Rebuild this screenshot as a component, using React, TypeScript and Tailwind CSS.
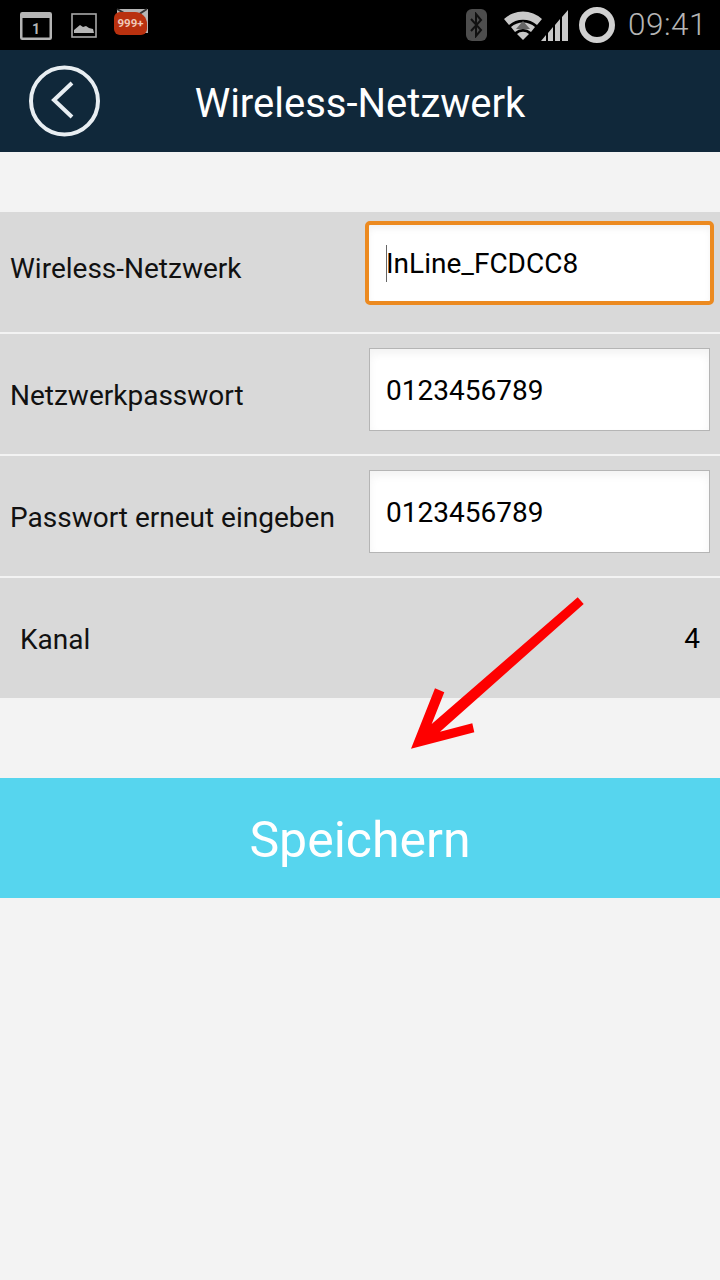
import React from "react";

const StatusBar = () => (
  <div className="h-[50px] bg-black flex items-center justify-between pr-[13px]">
    <div className="flex items-center pl-[20px]">
      {/* calendar */}
      <svg width="32" height="28" viewBox="0 0 32 28" className="mt-[1px]">
        <rect x="1.25" y="1.25" width="29.5" height="25.5" rx="1" fill="none" stroke="#b5b5b5" strokeWidth="2.5" />
        <rect x="1" y="1" width="30" height="5" fill="#b5b5b5" />
        <text x="16" y="22" textAnchor="middle" fontSize="14" fontWeight="700" fill="#b5b5b5" fontFamily="Roboto, sans-serif">1</text>
      </svg>
      {/* picture */}
      <svg width="26" height="25" viewBox="0 0 26 25" className="ml-[19px]">
        <rect x="1" y="1" width="24" height="23" fill="none" stroke="#a8a8a8" strokeWidth="1.6" />
        <path d="M3 20 L3 17 L9 12 L12 14 L15 13 L18 15 L22 16 L23 20 Z" fill="#b5b5b5" />
      </svg>
      {/* notification with badge */}
      <div className="relative w-[33px] h-[30px] ml-[18px]">
        <svg width="33" height="26" viewBox="0 0 33 26" className="absolute left-[1px] top-[-2px]">
          <rect x="1" y="1" width="31" height="24" fill="#b5b5b5" />
          <path d="M1 1 L17 10 L31 1" fill="none" stroke="#333" strokeWidth="2" />
        </svg>
        <div className="absolute left-[-1px] top-[2px] w-[33px] h-[23px] rounded-[6px] rounded-tr-[12px] bg-[#b9310f] flex items-center justify-center text-[11.5px] font-bold text-[#f0c8b8] font-['Roboto',sans-serif]">
          999+
        </div>
      </div>
    </div>
    <div className="flex items-center">
      {/* bluetooth */}
      <div className="w-[21px] h-[32px] rounded-[6px] bg-[#4d4d4d] flex items-center justify-center">
        <svg width="15" height="26" viewBox="0 0 15 26">
          <path d="M2 7 L12 18 L7 24 L7 2 L12 8 L2 19" fill="none" stroke="#111" strokeWidth="2" />
        </svg>
      </div>
      {/* wifi */}
      <svg width="38" height="30" viewBox="0 0 38 30" className="ml-[17px]">
        <path d="M0 9 A28 28 0 0 1 38 9 L33 15 A21 21 0 0 0 5 15 Z" fill="#c8c8c8" />
        <path d="M7 17 A18 18 0 0 1 31 17 L27 22 A12 12 0 0 0 11 22 Z" fill="#c8c8c8" />
        <path d="M19 11 L26 19 L12 19 Z" fill="#666" />
        <path d="M13 24 A9 9 0 0 1 25 24 L19 30 Z" fill="#c8c8c8" />
      </svg>
      {/* signal */}
      <svg width="27" height="32" viewBox="0 0 27 32" className="ml-[-1px]">
        <path d="M0 32 L5 26 L5 32 Z M7 24 L12 18 L12 32 L7 32 Z M14 16 L19 10 L19 32 L14 32 Z" fill="#c8c8c8" />
        <path d="M21 8 L27 1 L27 32 L21 32 Z" fill="#c8c8c8" />
      </svg>
      {/* battery ring */}
      <div className="w-[36px] h-[36px] rounded-full border-[6px] border-[#d0d0d0] ml-[11px]" />
      <span className="ml-[13px] text-[31.5px] leading-none tracking-[0.5px] text-[#b5b5b5] font-['Roboto',sans-serif] font-light">09:41</span>
    </div>
  </div>
);

const Header = () => (
  <div className="relative h-[102px] bg-[#10283a] flex items-center justify-center">
    <svg width="74" height="74" viewBox="0 0 74 74" className="absolute left-[28px] top-[14px]">
      <circle cx="36.5" cy="37" r="33.5" fill="none" stroke="#e8eef2" strokeWidth="4" />
      <path d="M44 19 L26 36 L44 53" fill="none" stroke="#e8eef2" strokeWidth="4" />
    </svg>
    <span className="text-[40px] leading-none text-white mt-[6px]">Wireless-Netzwerk</span>
  </div>
);

const Row = ({ label, value, focused }: { label: string; value: string; focused?: boolean }) => (
  <div className="h-[120px] bg-[#d9d9d9] flex items-center pl-[10px] pr-[10px] justify-between">
    <span className={focused ? "text-[28px] leading-none text-[#111] mt-[-6px]" : "text-[28px] leading-none text-[#111] mt-[4px]"}>{label}</span>
    {focused ? (
      <div className="self-start w-[349px] h-[84px] mr-[-4px] mt-[9px] rounded-[5px] border-[4px] border-[#ec8a20] bg-white shadow-[inset_0_4px_6px_rgba(0,0,0,0.05)] flex items-center pl-[17px]">
        <span className="w-px h-[37px] bg-[#666]" />
        <span className="text-[28px] leading-none text-black ml-[-1px] mt-[2px]">{value}</span>
      </div>
    ) : (
      <div className="self-start w-[341px] h-[83px] mt-[14px] border border-[#b5b5b5] bg-white shadow-[inset_0_5px_8px_rgba(0,0,0,0.05)] flex items-center pl-[16px]">
        <span className="text-[28px] leading-none text-black mt-[2px]">{value}</span>
      </div>
    )}
  </div>
);

const App: React.FC = () => {
  return (
    <div className="relative w-[720px] h-[1280px] bg-[#f3f3f3] overflow-hidden font-['Roboto',sans-serif]">
      <StatusBar />
      <Header />

      <div className="mt-[60px] flex flex-col gap-[2px]">
        <Row label="Wireless-Netzwerk" value="InLine_FCDCC8" focused />
        <Row label="Netzwerkpasswort" value="0123456789" />
        <Row label="Passwort erneut eingeben" value="0123456789" />
        <div className="h-[120px] bg-[#d9d9d9] flex items-center justify-between pl-[20px] pr-[20px]">
          <span className="text-[28px] leading-none text-[#111] mt-[4px]">Kanal</span>
          <span className="text-[28px] leading-none text-black mt-[2px]">4</span>
        </div>
      </div>

      <button className="block w-full h-[120px] mt-[80px] pt-[4px] bg-[#56d5ee] text-white text-[50px] leading-none">
        Speichern
      </button>

      {/* red arrow annotation */}
      <svg width="200" height="170" viewBox="0 0 200 170" className="absolute left-[400px] top-[590px]">
        <path
          d="M177.7 7.3 L31.7 134 L44.3 102.3 L35 98.3 L11 158.7 L74.3 142.3 L72.3 133.3 L40 141.7 L183.7 14 Z"
          fill="#fe0000"
        />
      </svg>
    </div>
  );
};

export default App;
